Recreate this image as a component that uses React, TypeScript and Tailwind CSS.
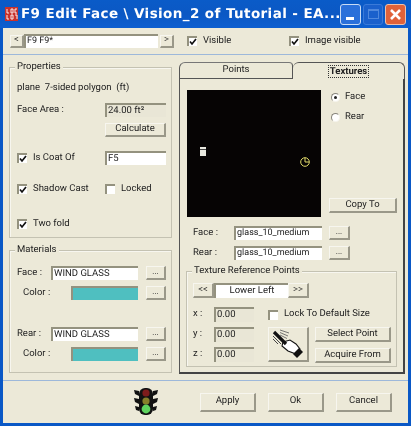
import type { ReactNode } from 'react';

const raised = 'border-t border-l border-t-[#f7f6ef] border-l-[#f7f6ef] border-r-2 border-b-2 border-r-[#9a9889] border-b-[#9a9889]';
const sunken = 'border-t-2 border-l-2 border-t-[#94927f] border-l-[#94927f]';

function Btn({ className = '', children }: { className?: string; children?: ReactNode }) {
  return (
    <div className={`${raised} bg-[#ece9d8] flex items-center justify-center text-[#222] ${className}`}>
      {children}
    </div>
  );
}

function Field({ className = '', gray = false, children }: { className?: string; gray?: boolean; children?: ReactNode }) {
  return (
    <div className={`${sunken} ${gray ? 'bg-[#e9e6d6]' : 'bg-white'} flex items-center pl-[1px] text-[#222] ${className}`}>
      {children}
    </div>
  );
}

function Check({ label, checked = true, className = '' }: { label: string; checked?: boolean; className?: string }) {
  return (
    <div className={`flex items-center gap-[6px] ${className}`}>
      <div className={`${sunken} bg-white w-[10px] h-[10px] flex items-center justify-center shrink-0`}>
        {checked && (
          <svg width="8" height="8" viewBox="0 0 8 8">
            <path d="M1 3.5 L3 6 L7 1" fill="none" stroke="#111" strokeWidth="1.7" />
          </svg>
        )}
      </div>
      <span>{label}</span>
    </div>
  );
}

function Radio({ label, on = false }: { label: string; on?: boolean }) {
  return (
    <div className="flex items-center gap-[5px] h-[14px]">
      <div className="w-[9px] h-[9px] rounded-full bg-white border border-t-[#86847a] border-l-[#86847a] border-r-[#f5f4ec] border-b-[#f5f4ec] flex items-center justify-center">
        {on && <div className="w-[3px] h-[3px] rounded-full bg-[#222]" />}
      </div>
      <span>{label}</span>
    </div>
  );
}

function Group({ title, className = '', children }: { title: string; className?: string; children: ReactNode }) {
  return (
    <div className={`relative border border-[#c4c2b2] shadow-[inset_1px_1px_0_#f7f6ef] ${className}`}>
      <span className="absolute -top-[7px] left-[5px] bg-[#ece9d8] px-[2px] leading-[12px]">{title}</span>
      {children}
    </div>
  );
}

function MaterialRow({ label, value, indent = false }: { label: string; value?: string; indent?: boolean }) {
  return (
    <div className="flex items-center h-[14px]">
      <span className={indent ? 'w-[54px] pl-[6px]' : 'w-[34px]'}>{label}</span>
      {value ? (
        <Field className="w-[87px] h-[14px]">{value}</Field>
      ) : (
        <div className={`${sunken} w-[67px] h-[14px] bg-[#4fbfc0]`} />
      )}
      <Btn className="w-[20px] h-[14px] ml-[8px] text-[8px] pb-[2px]">...</Btn>
    </div>
  );
}

function HandIcon() {
  return (
    <svg width="32" height="30" viewBox="0 0 32 30">
      <path d="M8 1 L17 4 M8 3.5 L16 7 M8 6 L15 9.5" stroke="#666" strokeWidth="0.9" fill="none" />
      <path d="M1 7 L9 15 M1 10 L6 15" stroke="#444" strokeWidth="1" fill="none" />
      <path d="M11 13 L18 11 L24 15 L28 20 L24 25 L16 22 L10 17 Z" fill="#fff" stroke="#111" strokeWidth="1.1" />
      <path d="M2 3 L14 15" stroke="#111" strokeWidth="3.2" />
      <path d="M27 19 L31 23 L25 29 L21 25 Z" fill="#111" />
    </svg>
  );
}

function TrafficLight() {
  return (
    <svg width="24" height="28" viewBox="0 0 24 28">
      <path d="M0 2 L5 3 L5 8 L1 6 Z M24 2 L19 3 L19 8 L23 6 Z M0 10 L5 11 L5 16 L1 14 Z M24 10 L19 11 L19 16 L23 14 Z M1 18 L5 19 L5 23 L2 22 Z M23 18 L19 19 L19 23 L22 22 Z" fill="#111" />
      <rect x="5" y="0" width="14" height="27" rx="6" fill="#121212" />
      <circle cx="12" cy="5" r="3.6" fill="#7d1c1c" />
      <circle cx="12" cy="13" r="3.6" fill="#85802a" />
      <circle cx="12" cy="21" r="4.4" fill="#5fd35f" />
    </svg>
  );
}

export default function App() {
  return (
    <div className="w-[411px] h-[426px] flex flex-col bg-[#0a58c6] overflow-hidden font-['Roboto',sans-serif] text-[9.5px] text-[#222] blur-[0.35px] [text-rendering:geometricPrecision]">
      {/* Title bar */}
      <div className="h-[28px] shrink-0 flex items-center pl-[5px] pr-[5px] bg-gradient-to-b from-[#0a5bc8] via-[#0b58c4] to-[#0d5fd0]">
        <svg width="13" height="14" viewBox="0 0 13 14" className="shrink-0">
          <rect width="13" height="14" fill="#c8322c" />
          <path d="M2 2 V6 H4 M6 2 H8 V6 H6 Z M10 2 H12 M10 2 V6 H12 M2 8 V12 H4 M6 8 H8 V12 H6 Z M10 8 H12 V12" stroke="#fff" strokeWidth="0.9" fill="none" />
        </svg>
        <span className="ml-[3px] flex-1 min-w-0 font-['DejaVu_Sans',sans-serif] font-bold text-[13.5px] tracking-[0.4px] text-white whitespace-nowrap">
          F9 Edit Face \ Vision_2 of Tutorial - EA...
        </span>
        <div className="w-[21px] h-[21px] rounded-[3px] border border-[#c9dcf5] bg-[#2a70da] flex items-end pl-[5px] pb-[4px]">
          <div className="w-[8px] h-[3px] bg-white" />
        </div>
        <div className="ml-[2px] w-[20px] h-[21px] rounded-[3px] border border-[#3a7ad8] bg-[#1a60cc] flex items-center justify-center">
          <div className="w-[11px] h-[10px] border border-[#4f88dd] border-t-2" />
        </div>
        <div className="ml-[2px] w-[21px] h-[21px] rounded-[3px] border border-[#f0c0a8] bg-[#e0623a] flex items-center justify-center">
          <svg width="13" height="13" viewBox="0 0 13 13">
            <path d="M2 2 L11 11 M11 2 L2 11" stroke="#fff" strokeWidth="2.6" />
          </svg>
        </div>
      </div>

      <div className="mx-[3px] h-[395px] shrink-0 bg-[#ece9d8] flex flex-col">
        {/* Top strip */}
        <div className="h-[27px] shrink-0 flex items-center pl-[7px] border-b border-b-[#9db8da]">
          <Btn className="w-[14px] h-[13px]">&lt;</Btn>
          <Field className="w-[134px] h-[14px] text-[9px]">F9 F9*</Field>
          <Btn className="ml-[2px] w-[14px] h-[13px]">&gt;</Btn>
          <Check label="Visible" className="ml-[13px] w-[102px]" />
          <Check label="Image visible" />
        </div>

        <div className="h-[326px] shrink-0 flex pl-[6px] border-b border-b-[#9db8da]">
          {/* Left column */}
          <div className="w-[163px] shrink-0 pt-[12px] flex flex-col gap-[12px]">
            <Group title="Properties" className="h-[171px] pl-[7px] pr-[5px] flex flex-col">
              <div className="mt-[13px] h-[14px] flex items-center">plane&nbsp; 7-sided polygon&nbsp; (ft)</div>
              <div className="mt-[8px] h-[14px] flex items-center justify-between">
                <span>Face Area :</span>
                <Field gray className="w-[61px] h-[14px]">24.00 ft²</Field>
              </div>
              <Btn className="mt-[6px] self-end w-[61px] h-[14px]">Calculate</Btn>
              <div className="mt-[14px] h-[14px] flex items-center justify-between">
                <Check label="Is Coat Of" />
                <Field className="w-[61px] h-[14px]">F5</Field>
              </div>
              <div className="mt-[17px] h-[14px] flex items-center justify-between">
                <Check label="Shadow Cast" />
                <Check label="Locked" checked={false} className="w-[61px]" />
              </div>
              <Check label="Two fold" className="mt-[21px] h-[14px]" />
            </Group>

            <Group title="Materials" className="h-[123px] pl-[7px] flex flex-col">
              <div className="mt-[15px]"><MaterialRow label="Face :" value="WIND GLASS" /></div>
              <div className="mt-[6px]"><MaterialRow label="Color :" indent /></div>
              <div className="mt-[27px]"><MaterialRow label="Rear :" value="WIND GLASS" /></div>
              <div className="mt-[6px]"><MaterialRow label="Color :" indent /></div>
            </Group>
          </div>

          {/* Right column */}
          <div className="ml-[7px] w-[226px] shrink-0 pt-[7px] flex flex-col">
            <div className="h-[17px] flex shrink-0">
              <div className="w-[114px] border-t border-l border-b border-r border-[#555] border-t-[#777] rounded-tl-[6px] rounded-tr-[4px] flex items-center justify-center">
                Points
              </div>
              <div className="flex-1 border-t border-r border-[#555] rounded-t-[6px] flex items-center justify-center font-bold">
                <span className="border border-dotted border-[#333] leading-[11px] px-[1px]">Textures</span>
              </div>
            </div>

            <div className="h-[295px] border-l border-r-2 border-b-2 border-l-[#555] border-r-[#444] border-b-[#444] pl-[7px] flex flex-col">
              <div className="mt-[11px] flex">
                <div className="relative w-[134px] h-[127px] bg-[#060404] shrink-0">
                  {/* Preview marks */}
                  <svg width="134" height="127" viewBox="0 0 134 127" className="absolute inset-0">
                    <rect x="13" y="57" width="6" height="9" fill="#e8e8e0" />
                    <path d="M13 59.5 H19" stroke="#444" />
                    <circle cx="118" cy="72" r="4.3" fill="none" stroke="#e2dc6a" strokeWidth="1" />
                    <path d="M118 68 V72 H122" stroke="#e2dc6a" fill="none" />
                  </svg>
                </div>
                <div className="ml-[8px] w-[68px] flex flex-col">
                  <div className="pl-[2px] flex flex-col gap-[6px]">
                    <Radio label="Face" on />
                    <Radio label="Rear" />
                  </div>
                  <Btn className="mt-[74px] h-[15px]">Copy To</Btn>
                </div>
              </div>

              <div className="mt-[9px] h-[14px] flex items-center">
                <span className="w-[47px] pl-[6px]">Face :</span>
                <Field className="w-[88px] h-[14px] text-[9px]">glass_10_medium</Field>
                <Btn className="ml-[7px] w-[21px] h-[14px] text-[8px] pb-[2px]">...</Btn>
              </div>
              <div className="mt-[6px] h-[14px] flex items-center">
                <span className="w-[47px] pl-[6px]">Rear :</span>
                <Field className="w-[88px] h-[14px] text-[9px]">glass_10_medium</Field>
                <Btn className="ml-[7px] w-[21px] h-[14px] text-[8px] pb-[2px]">...</Btn>
              </div>

              <Group title="Texture Reference Points" className="mt-[11px] -ml-[1px] w-[211px] h-[96px] pl-[6px] flex flex-col">
                <div className="mt-[11px] flex h-[15px]">
                  <Btn className="w-[21px]">&lt;&lt;</Btn>
                  <div className={`${sunken} w-[74px] bg-white flex items-center justify-center`}>Lower Left</div>
                  <Btn className="w-[21px]">&gt;&gt;</Btn>
                </div>
                <div className="mt-[9px] flex">
                  <div className="w-[61px] flex flex-col gap-[5px]">
                    <div className="flex items-center justify-between h-[15px]"><span>x :</span><Field gray className="w-[40px] h-[15px]">0.00</Field></div>
                    <div className="flex items-center justify-between h-[15px]"><span>y :</span><Field gray className="w-[40px] h-[15px]">0.00</Field></div>
                    <div className="flex items-center justify-between h-[15px]"><span>z :</span><Field gray className="w-[40px] h-[15px]">0.00</Field></div>
                  </div>
                  <div className="ml-[14px] flex flex-col">
                    <Check label="Lock To Default Size" checked={false} className="h-[15px]" />
                    <div className="mt-[5px] flex">
                      <Btn className="w-[41px] h-[35px]"><HandIcon /></Btn>
                      <div className="ml-[6px] w-[76px] flex flex-col gap-[6px]">
                        <Btn className="h-[15px]">Select Point</Btn>
                        <Btn className="h-[15px]">Acquire From</Btn>
                      </div>
                    </div>
                  </div>
                </div>
              </Group>
            </div>
          </div>
        </div>

        {/* Bottom bar */}
        <div className="flex-1 flex items-center pl-[131px]">
          <TrafficLight />
          <Btn className="ml-[42px] w-[56px] h-[19px]">Apply</Btn>
          <Btn className="ml-[12px] w-[56px] h-[19px]">Ok</Btn>
          <Btn className="ml-[12px] w-[56px] h-[19px]">Cancel</Btn>
        </div>
      </div>
    </div>
  );
}
